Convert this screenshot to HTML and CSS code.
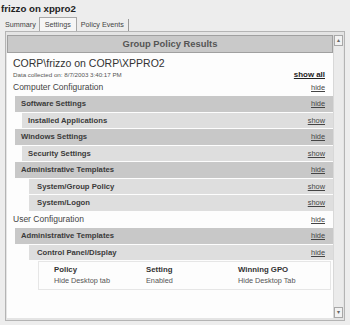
FILE: index.html
```html
<!DOCTYPE html>
<html lang="en">
<head>
  <meta charset="UTF-8">
  <title>frizzo on xppro2</title>
  <link rel="stylesheet" href="styles.css">
</head>
<body>
  <div class="title">frizzo on xppro2</div>

  <div class="tabs">
    <span class="tab">Summary</span>
    <span class="tab active">Settings</span>
    <span class="tab last">Policy Events</span>
  </div>

  <div class="panel">
    <div class="doc">
      <div class="gp-header">Group Policy Results</div>
      <div class="owner">CORP\frizzo on CORP\XPPRO2</div>
      <div class="collected">
        <span class="stamp">Data collected on: 8/7/2003 3:40:17 PM</span>
        <a class="show-all">show all</a>
      </div>

      <div class="row plain"><span>Computer Configuration</span><a>hide</a></div>
      <div class="row lvl1"><span>Software Settings</span><a>hide</a></div>
      <div class="row lvl2"><span>Installed Applications</span><a>show</a></div>
      <div class="row lvl1"><span>Windows Settings</span><a>hide</a></div>
      <div class="row lvl2"><span>Security Settings</span><a>show</a></div>
      <div class="row lvl1"><span>Administrative Templates</span><a>hide</a></div>
      <div class="row lvl3"><span>System/Group Policy</span><a>show</a></div>
      <div class="row lvl3"><span>System/Logon</span><a>show</a></div>
      <div class="row plain"><span>User Configuration</span><a>hide</a></div>
      <div class="row lvl1"><span>Administrative Templates</span><a>hide</a></div>
      <div class="row lvl3"><span>Control Panel/Display</span><a>hide</a></div>

      <div class="policy">
        <div class="cell head">Policy</div>
        <div class="cell head">Setting</div>
        <div class="cell head">Winning GPO</div>
        <div class="cell">Hide Desktop tab</div>
        <div class="cell">Enabled</div>
        <div class="cell">Hide Desktop Tab</div>
      </div>
    </div>

    <div class="scrollbar">
      <div class="sb-btn">&#9652;</div>
      <div class="sb-track"></div>
      <div class="sb-btn">&#9662;</div>
    </div>
  </div>
</body>
</html>
```

FILE: styles.css
```css
/* base */
html, body {
  margin: 0;
  padding: 0;
  background: #ededed;
  color: #333;
  font-family: 'Liberation Sans', Arial, sans-serif;
}

body {
  width: 350px;
  height: 325px;
  overflow: hidden;
}

.title {
  font-weight: bold;
  font-size: 9.7px;
  line-height: 12px;
  padding: 3px 0 0 1px;
  height: 14px;
  color: #222;
}

/* tabs */
.tabs {
  display: flex;
  align-items: flex-end;
  height: 14px;
  padding-left: 2px;
}

.tab {
  font-size: 7.2px;
  line-height: 12px;
  padding: 0 3px;
  color: #444;
}

.tab.active {
  background: #f6f6f6;
  border: 1px solid #a8a8a8;
  border-bottom: none;
  padding: 0 5px;
  line-height: 13px;
}

.tab.last {
  padding: 0 4px;
  border-right: 1px solid #999;
}

/* tab page */
.panel {
  box-sizing: border-box;
  width: 340px;
  height: 290px;
  margin-left: 5px;
  border: 1px solid #b4b4b4;
  background: #e4e4e4;
  padding: 3px 1px 2px 1px;
  display: flex;
}

.doc {
  flex: 1;
  background: #fdfdfd;
  display: flex;
  flex-direction: column;
}

.gp-header {
  height: 18px;
  box-sizing: border-box;
  border: 1px solid #a0a0a0;
  background: #c9c9c9;
  text-align: center;
  font-weight: bold;
  font-size: 9.4px;
  line-height: 16px;
  color: #555;
}

.owner {
  margin-top: 4px;
  padding-left: 6px;
  font-size: 10.5px;
  line-height: 12px;
  color: #333;
}

.collected {
  height: 10.5px;
  display: flex;
  justify-content: space-between;
  align-items: center;
  padding: 0 8px 0 6px;
}

.stamp {
  font-size: 6.2px;
  color: #555;
}

a {
  color: #444;
  text-decoration: underline;
  font-size: 7.4px;
}

.show-all {
  font-weight: bold;
  font-size: 7.9px;
  color: #222;
}

/* section rows */
.row {
  height: 15.5px;
  margin-bottom: 1px;
  display: flex;
  justify-content: space-between;
  align-items: center;
  padding: 0 8px 0 6px;
}

.row span {
  font-weight: bold;
  font-size: 7.7px;
  color: #3a3a3a;
}

.row.plain span {
  font-weight: normal;
  font-size: 8.5px;
  color: #444;
}

.row.lvl1 {
  margin-left: 8px;
  background: #c8c8c8;
}

.row.lvl2 {
  margin-left: 15px;
  background: #dedede;
}

.row.lvl3 {
  margin-left: 22px;
  background: #dedede;
  padding-left: 8px;
}

/* settings table */
.policy {
  margin: 0 2px 0 31px;
  border: 1px solid #e6e6e6;
  display: grid;
  grid-template-columns: 92px 92px 1fr;
  padding: 2px 0 3px 15px;
}

.cell {
  font-size: 7.3px;
  line-height: 11px;
  color: #555;
}

.cell.head {
  font-weight: bold;
  font-size: 7.8px;
  color: #333;
}

/* scrollbar */
.scrollbar {
  width: 9px;
  display: flex;
  flex-direction: column;
  background: #ebebeb;
  border-left: 1px solid #d8d8d8;
}

.sb-btn {
  height: 11px;
  box-sizing: border-box;
  border: 1px solid #a8a8a8;
  background: #f2f2f2;
  font-size: 6px;
  line-height: 9px;
  text-align: center;
  color: #666;
}

.sb-track {
  flex: 1;
}
```
